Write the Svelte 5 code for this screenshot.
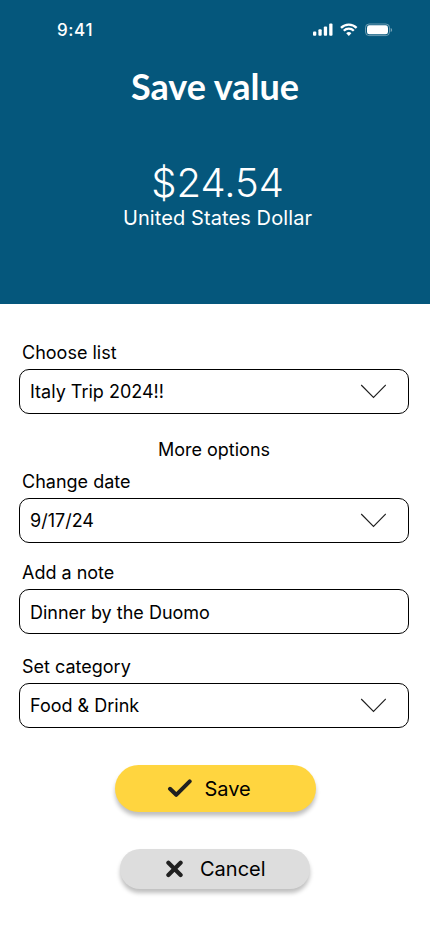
<script>
  let list = $state('Italy Trip 2024!!');
  let date = $state('9/17/24');
  let note = $state('Dinner by the Duomo');
  let category = $state('Food & Drink');
</script>

{#snippet field(label, value, select)}
  <div class="field">
    <div class="label">{label}</div>
    <div class="box" class:input={!select}>
      <span>{value}</span>
      {#if select}
        <svg width="26" height="15" viewBox="0 0 26 15" fill="none" stroke="#1d1d1d" stroke-width="1.1"><path d="M1.2 1 13.5 13.4 25.8 1" /></svg>
      {/if}
    </div>
  </div>
{/snippet}

<main>
  <header>
    <div class="status">
      <span class="time">9:41</span>
      <svg width="80" height="14" viewBox="0 0 80 14" fill="#fff">
        <rect x="0" y="8.5" width="3.3" height="4.2" rx="1" />
        <rect x="5.4" y="6.2" width="3.3" height="6.5" rx="1" />
        <rect x="10.8" y="3.5" width="3.3" height="9.2" rx="1" />
        <rect x="16.2" y="0.6" width="3.3" height="12.1" rx="1" />
        <g fill="none" stroke="#fff" stroke-width="2.3">
          <path d="M28 4.9a11 11 0 0 1 15.6 0" />
          <path d="M30.8 7.8a7 7 0 0 1 10 0" />
        </g>
        <path d="M33.2 10.3a3.8 3.8 0 0 1 5.2 0l-2.6 2.6z" />
        <rect x="52.5" y="1" width="24" height="11.6" rx="3.6" fill="none" stroke="#fff" stroke-opacity=".4" />
        <rect x="54" y="2.3" width="21" height="9" rx="2.4" />
        <path d="M77.7 4.9v4c.8-.3 1.4-1.1 1.4-2s-.6-1.7-1.4-2z" opacity=".45" />
      </svg>
    </div>
    <h1>Save value</h1>
    <div class="amount">$24.54</div>
    <div class="currency">United States Dollar</div>
  </header>

  <section class="form">
    {@render field('Choose list', list, true)}
    <div class="more">More options</div>
    {@render field('Change date', date, true)}
    <div class="note">{@render field('Add a note', note, false)}</div>
    <div class="category">{@render field('Set category', category, true)}</div>
  </section>

  <button class="save">
    <svg width="26" height="20" viewBox="0 0 26 20" fill="none" stroke="#202020" stroke-width="4" stroke-linecap="round" stroke-linejoin="round"><path d="M3 9.8 9.2 15.8 22.7 2.3" /></svg>
    <span>Save</span>
  </button>
  <button class="cancel">
    <svg width="18" height="18" viewBox="0 0 18 18" fill="none" stroke="#202020" stroke-width="4.2" stroke-linecap="round"><path d="M2.4 2.8 14.6 15M14.6 2.8 2.4 15" /></svg>
    <span>Cancel</span>
  </button>
</main>

<style>
  :global(body) { margin: 0; background: #fff; }
  main {
    width: 430px;
    height: 932px;
    overflow: hidden;
    display: flex;
    flex-direction: column;
    align-items: center;
    background: #fff;
    color: #000;
    font: 18px/22px Inter, sans-serif;
  }
  header {
    width: 430px;
    height: 304px;
    background: #05577c;
    color: #fff;
    display: flex;
    flex-direction: column;
    align-items: center;
    flex: none;
  }
  .status {
    width: 336px;
    height: 14px;
    padding: 23px 37px 0 57px;
    display: flex;
    justify-content: space-between;
    align-items: center;
  }
  .status svg { flex: none; }
  .time { font-size: 17px; font-weight: 500; letter-spacing: .6px; }
  h1 {
    margin: 26px 0 0;
    font: 700 36px/46px Lato, sans-serif;
    white-space: nowrap;
  }
  .amount {
    margin: 49px 0 0 5px;
    font-size: 40px;
    line-height: 50px;
    font-weight: 350;
  }
  .currency {
    margin: -2px 0 0 5px;
    font-size: 20px;
    line-height: 24px;
    font-weight: 370;
    letter-spacing: .1px;
  }
  .form { width: 390px; margin: 38px 0 0 -2px; }
  .label { padding-left: 3px; height: 27px; white-space: nowrap; }
  .box {
    height: 45px;
    box-sizing: border-box;
    border: 1px solid #000;
    border-radius: 10px;
    padding: 0 22px 0 10px;
    display: flex;
    align-items: center;
    justify-content: space-between;
  }
  .input { padding-top: 2px; }
  .more { margin: 25px 0 10px; text-align: center; }
  .note { margin-top: 19px; }
  .category { margin-top: 22px; }
  button {
    border: 0;
    color: #000;
    padding: 0;
    display: flex;
    align-items: center;
    font: 20px/24px Inter, sans-serif;
    box-shadow: 0 4px 4px rgba(0, 0, 0, .25);
    flex: none;
  }
  .save {
    width: 201px;
    height: 47px;
    margin-top: 37px;
    border-radius: 24px;
    background: #ffd53f;
    padding-left: 52px;
    gap: 12px;
  }
  .cancel {
    width: 190px;
    height: 40px;
    margin-top: 37px;
    border-radius: 20px;
    background: #ddd;
    padding-left: 46px;
    gap: 16px;
  }
</style>
